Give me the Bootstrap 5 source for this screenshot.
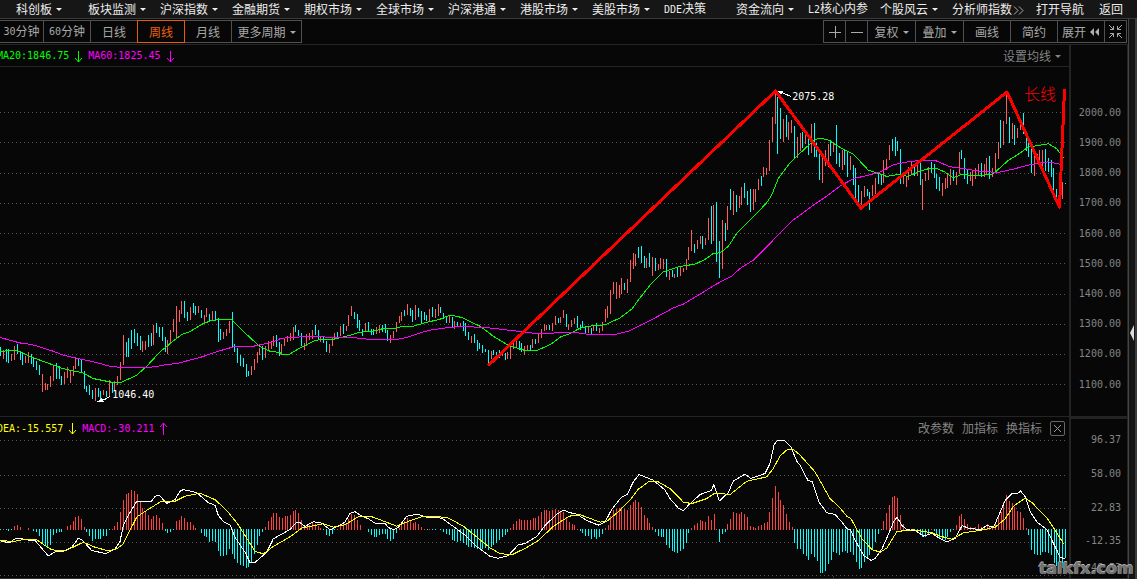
<!DOCTYPE html>
<html lang="zh-CN" data-bs-theme="dark">
<head>
<meta charset="utf-8">
<meta name="viewport" content="width=device-width, initial-scale=1">
<title>周线 K线图</title>
<link href="https://cdn.jsdelivr.net/npm/bootstrap@5.3.0/dist/css/bootstrap.min.css" rel="stylesheet">
<style>
:root{--ink:#070707;--rule:#242424;--edge:#505050;--dim:#848484}
body{background:var(--ink);color:#e6e6e6;font:12px/16px "Noto Sans CJK SC",sans-serif;min-height:100vh}
.num{font-family:"DejaVu Sans Mono",monospace;font-size:10px}
.menu{height:19px;background:#161616;border-bottom:1px solid #3a3a3a}
.menu a{flex:0 1 72px;color:#ececec;text-decoration:none;white-space:nowrap;overflow:hidden}
.menu a.first{flex-basis:16px}
.menu a.wide{flex-basis:84px}
.menu a.mid{flex-basis:63px}
.menu a.end{flex-basis:38px}
.tri::after{content:"";display:inline-block;margin-left:4px;vertical-align:3px;border:3px solid transparent;border-top-color:currentColor;border-bottom:0}
.tools{height:26px;padding:1px 2px 0 0;border-bottom:1px solid var(--rule)}
.tool{height:23px;width:48px;margin-right:-1px;padding:0;border:1px solid var(--edge);border-radius:0;background:none;color:#a8a8a8;font:inherit;white-space:nowrap}
.tool .num{vertical-align:1px}
.tool.slim{width:23px}
.tool.broad{width:71px}
.tool.roomy{width:49px}
.tool.active{border-color:#e85a0c;color:#f06010;position:relative;z-index:1}
.tool:first-child.cut{border-left:0;width:44px}
.tool svg{display:block;margin:auto}
.rail{width:9px;background:linear-gradient(90deg,#444 0 1px,#151515 1px 7px,#3c3c3c 7px)}
.rail svg{display:block}
.pane-main{flex:372 1 0;min-height:0}
.pane-macd{flex:161 1 0;min-height:0;border-bottom:1px solid #303030}
.legend-row{height:22px;flex:none}
.legend-row .num{white-space:pre;padding-top:1px}
.pane-main .legend-row,.pane-main{border-bottom:1px solid var(--rule)}
.up-shift{margin-left:-3px}
.lime{color:#0f0}.magenta{color:#f0f}.gold{color:#ff0}
.text-btn{background:none;border:0;padding:0;color:var(--dim);font:inherit}
.close-btn{width:15px;height:15px;border:1px solid #666;border-radius:2px;background:none;padding:0;color:#999}
.close-btn svg{display:block;margin:auto}
.axis{flex:0 0 59px;border-left:2px solid var(--rule);border-right:1px solid var(--rule);color:var(--dim);text-align:right;padding-right:6px}
.axis-price{display:grid;grid-template-rows:52fr repeat(10,30.2fr) 17fr;grid-auto-rows:0;align-items:center;line-height:18px}
.axis-price span,.axis-macd span{min-height:0}
.axis-price span{padding-top:1px}
.axis-macd{display:grid;grid-template-rows:3fr 35fr 34fr 33fr 33fr 21fr;align-items:center;border-top:2px solid var(--rule)}
.plot{position:relative;flex:1 1 0;min-height:0}
.plot svg{position:absolute;inset:0;width:100%;height:100%;shape-rendering:crispEdges}
.tag{position:absolute;color:#fff;transform:translateY(-50%)}
.tag-high{left:74.1%;top:8.6%}
.tag-low{left:10.5%;top:93.8%}
.tag-note{left:95.8%;top:7.4%;color:#f00;font-size:16px;line-height:16px;font-weight:300;white-space:nowrap}
.watermark{position:absolute;right:3px;bottom:1px;font:bold 16px/18px "DejaVu Sans",sans-serif;color:#707070;text-shadow:0 -1px #b4b4b4,-1px 0 #8c8c8c,1px 1px #111}
</style>
</head>
<body class="d-flex flex-column vh-100 overflow-hidden">
<nav class="menu d-flex align-items-center flex-shrink-0" aria-label="主菜单">
<a class="first" href="#" aria-label="更多"></a>
<a class="tri" href="#">科创板</a><a class="tri" href="#">板块监测</a><a class="tri" href="#">沪深指数</a><a class="tri" href="#">金融期货</a><a class="tri" href="#">期权市场</a><a class="tri" href="#">全球市场</a><a class="tri" href="#">沪深港通</a><a class="tri" href="#">港股市场</a><a class="tri" href="#">美股市场</a><a href="#"><span class="num">DDE</span>决策</a><a class="tri" href="#">资金流向</a><a href="#"><span class="num">L2</span>核心内参</a><a class="tri" href="#">个股风云</a><a class="wide" href="#">分析师指数<svg width="13" height="9" viewBox="0 0 13 9" fill="none" stroke="#aaa"><path d="M2 .5l4 4-4 4M7 .5l4 4-4 4"/></svg></a><a class="mid" href="#">打开导航</a><a class="end" href="#">返回</a>
</nav>
<div class="d-flex flex-grow-1" style="min-height:0">
<main class="d-flex flex-column flex-grow-1" style="min-width:0">
<div class="tools d-flex justify-content-between flex-shrink-0">
<div class="d-flex">
<button class="tool cut"><span class="num">30</span>分钟</button><button class="tool"><span class="num">60</span>分钟</button><button class="tool">日线</button><button class="tool active">周线</button><button class="tool">月线</button><button class="tool broad tri">更多周期</button>
</div>
<div class="d-flex">
<button class="tool slim" aria-label="放大"><svg width="12" height="12" stroke="#aaa"><path d="M0 6.500h12M6.500 0v12"/></svg></button><button class="tool slim" aria-label="缩小"><svg width="12" height="12" stroke="#aaa"><path d="M0 6.500h12"/></svg></button><button class="tool roomy tri">复权</button><button class="tool roomy tri">叠加</button><button class="tool">画线</button><button class="tool">简约</button><button class="tool"><span class="d-flex align-items-center justify-content-center gap-1">展开<svg class="m-0" width="10" height="8" fill="#b0b0b0"><path d="M4 0v8L0 4zM9 0v8L5 4z"/></svg></span></button><button class="tool slim" aria-label="还原"><svg width="13" height="13" fill="none" stroke="#aaa"><path d="M0 0l4.500 4.500M1 4.500h3.500V1M13 0L8.500 4.500M12 4.500H8.500V1M0 13l4.500-4.500M1 8.500h3.500V12M13 13L8.500 8.500M12 8.500H8.500V12"/></svg></button>
</div>
</div>
<section class="pane-main d-flex" aria-label="K线">
<div class="d-flex flex-column flex-grow-1">
<div class="legend-row d-flex justify-content-between align-items-center">
<div class="d-flex align-items-center num up-shift"><span class="lime">MA20:1846.75</span><svg class="mx-1" width="11" height="13" fill="none" stroke="#0f0"><path d="M5.500 1v11M2 8l3.500 4L9 8"/></svg><span class="magenta">MA60:1825.45</span><svg class="mx-1" width="11" height="13" fill="none" stroke="#f0f"><path d="M5.500 1v11M2 8l3.500 4L9 8"/></svg></div>
<button class="text-btn tri me-2">设置均线</button>
</div>
<div class="plot">
<svg viewBox="0 67 1069 349" preserveAspectRatio="none" fill="none">
<path stroke="#555" stroke-dasharray="1 3" d="M0 112.500H1065M0 142.500H1065M0 173.500H1065M0 203.500H1065M0 233.500H1065M0 263.500H1065M0 294.500H1065M0 324.500H1065M0 354.500H1065M0 384.500H1065"/>
<path id="rise" stroke="#ff5c5c"/><path id="fall" stroke="#00ffff"/>
<path id="ma20" stroke="#00ff00"/><path id="ma60" stroke="#ff00ff"/>
<path stroke="#ff0000" stroke-width="3" stroke-linejoin="round" stroke-linecap="round" d="M489 364.500L775.500 91L861 208L1007 92L1059.500 207L1064.500 90"/>
<path stroke="#fff" d="M779 91.500l5 2 7 3M98 401l7-2 5-3"/><path fill="#fff" d="M777 90.500h7l-3 4zM97 401.500l5-4 2 4z"/>
</svg>
<span class="tag tag-high num">2075.28</span><span class="tag tag-low num">1046.40</span><span class="tag tag-note">长线</span>
</div>
</div>
<div class="axis axis-price num"><i></i><span>2000.00</span><span>1900.00</span><span>1800.00</span><span>1700.00</span><span>1600.00</span><span>1500.00</span><span>1400.00</span><span>1300.00</span><span>1200.00</span><span>1100.00</span><i></i></div>
</section>
<section class="pane-macd d-flex" aria-label="MACD">
<div class="d-flex flex-column flex-grow-1">
<div class="legend-row d-flex justify-content-between align-items-center">
<div class="d-flex align-items-center num up-shift"><span class="gold">DEA:-15.557</span><svg class="mx-1" width="11" height="13" fill="none" stroke="#ff0"><path d="M5.500 1v11M2 8l3.500 4L9 8"/></svg><span class="magenta">MACD:-30.211</span><svg class="mx-1" width="11" height="13" fill="none" stroke="#f0f"><path d="M5.500 13V1M2 5l3.500-4L9 5"/></svg></div>
<div class="d-flex align-items-center gap-2 pe-1"><button class="text-btn">改参数</button><button class="text-btn">加指标</button><button class="text-btn">换指标</button><button class="close-btn" aria-label="关闭"><svg width="9" height="9" stroke="#999"><path d="M1 1l7 7M8 1L1 8"/></svg></button></div>
</div>
<div class="plot">
<svg viewBox="0 439 1069 138" preserveAspectRatio="none" fill="none">
<path stroke="#555" stroke-dasharray="1 3" d="M0 440.500H1065M0 475.500H1065M0 508.500H1065M0 541.500H1065M0 574.500H1065"/>
<path stroke="#333" d="M106.500 575v2M254.500 575v2M398.500 575v2M543.500 575v2M688.500 575v2M833.500 575v2M981.500 575v2"/>
<path id="plus" stroke="#ff4040"/><path id="minus" stroke="#00ffff"/>
<path id="dif" stroke="#fff"/><path id="dea" stroke="#ff0"/>
</svg>
</div>
</div>
<div class="axis axis-macd num"><i></i><span>96.37</span><span>58.00</span><span>22.83</span><span>-12.35</span><span>-46.53</span></div>
</section>
</main>
<aside class="rail d-flex align-items-center flex-shrink-0" aria-label="侧栏"><svg width="9" height="110" fill="#ddd"><path d="M2 89l4-8v16z"/></svg></aside>
</div>
<div class="watermark">talkfx.com</div>
<script src="https://cdn.jsdelivr.net/npm/bootstrap@5.3.0/dist/js/bootstrap.bundle.min.js"></script>
<script>
// Samples are stored in thirds of a pixel, relative to each block's origin.
const put = (id, d) => document.getElementById(id).setAttribute('d', d);
// Price bars: [first x, origin y, "colour high,low ..."]
const bars = [
[.5,280,'c201,228 r210,237 c207,246 c207,249 r222,243 r198,240 c192,222 c213,240 c216,255 r228,249 r216,249 c222,252 c231,261 c243,270 c255,285 r282,336 r309,330 r312,330 r288,321 r255,303 c249,297 c258,297 c288,315 r276,312 r261,294 r270,309 r258,288 r231,267 c234,258 c237,276 c273,327 c318,336 c315,345 c330,357 r324,363 c324,350 c333,363 r330,345 c333,351 r300,348 c306,339 r303,333 r288,315 r246,300 r165,255 c186,231 c174,232 c150,207 c147,189 c159,198 c168,210 r183,216 r183,210 c165,201 c159,198 r135,195 c129,159 c141,171 c141,183 c171,216 r180,222 r150,189 r117,156 r78,177 r90,126 r63,102 c63,114 c96,123 r81,120 c69,99 c78,105 r78,99 c90,114 r105,132 r84,111 c102,123 r93,120 c93,120 c114,186 c147,180 r156,177 r147,168 r123,159 c96,204 c192,216 c204,249 c225,258 c234,262 c252,291 c273,288 r258,285 r237,270 r216,249 r204,225 c198,240 r198,234 r183,210 r183,207 r168,198 c165,200 c186,228'],
[281.85,280,'r192,225 r177,198 r168,186 r159,183 r141,180 c135,156 c150,168 c159,198 r189,210 r162,198 r159,180 r150,177 c135,165 c150,180 r171,186 c171,189 c183,216 r192,219 r174,198 r159,180 c156,171 r138,168 c132,162 r138,153 r105,138 r78,108 c96,117 c102,144 c120,153 c147,168 r129,153 c126,153 c147,165 c147,165 r141,162 r135,159 c135,156 c132,159 c150,183 r165,189 r153,174 r126,156 r108,129 r96,123 c90,108 r72,105 c84,108 c90,126 r75,120 c84,111 c93,132 c96,120 c105,123 r87,123 c81,111 r87,114 r72,108 c81,99 c99,117 c108,129 r108,129 c111,141 r123,147 c126,138 r129,141 c123,153 c129,168 c156,180 r168,189 c162,189 c180,213 c189,207 c195,219 c207,216 c210,249 r213,237 c210,225 c216,231 c210,234 r216,228 c219,240 r216,237 r195,237 r189,207 r183,204 c183,210 c189,216 r198,225 r195,213 c195,210 r177,204 c177,192 r162,189 r147,174 r132,153 r135,150 c135,150 r129,153 r108,135 c114,129'],
[560.5,180,'r411,429 r390,414 c402,441 r432,450 r420,441 r414,432 c408,444 c435,450 c423,444 c438,459 r441,459 c444,462 r435,453 c429,453 r444,459 r426,453 r387,426 r378,414 r330,402 r306,342 r306,357 r315,354 r294,342 c309,330 r297,339 r240,306 r219,267 r222,258 c201,234 c198,249 c228,264 r234,264 c219,261 r231,288 c234,273 r252,270 r234,267 r237,267 c237,291 r273,300 c270,291 r282,294 c264,291 r261,288 r264,276 r237,270 r201,240 r150,213 c192,219 r180,207 r168,192 c168,207 r174,195 r114,180 c78,192 r75,183 c66,246 c183,294 r120,267 c129,183 r78,150 c27,90 r33,105 c45,96 r48,84 r21,75 c9,54 c33,75 c27,96 r27,90 r27,66'],
[758.3,70,'r327,360 c318,348 r291,321 r294,315 r210,303 r141,216 r60,162 c81,252 c114,207 r147,216 c135,201 r156,210 r150,189 c168,264 r201,264 r189,243 c186,234 r195,222 c207,255 r162,249 c159,261 c219,261 c240,330 r255,339 r240,288 r222,291 c210,258 r216,246 c165,282 c249,291 r240,300 c237,285 c246,321 r258,300 c285,345 c294,384 c345,402 r363,405 r348,381 c357,378 c366,420 r345,378 r324,372 c309,342 c312,345 r270,339 r267,300 r225,270 c207,243 c201,258 c213,243 c237,342 r312,342 r318,351 r291,330 r276,315 c282,318 r285,318 c276,345 r327,420 r309,333 r291,330 c276,309 c282,324 c312,357 c321,362'],
[942.3,70,'r339,378 r324,357 r309,354 r297,345 c300,333 r306,345 r246,312 c240,267 c264,327 c297,342 r306,333 r303,348 r294,327 r282,318 c279,321 r282,321 r264,312 c258,327 r294,321 r249,309 r216,267 c150,234 r153,225 r72,162 c141,219 r159,207 c165,225 r174,204 r162,180 c129,192 c186,243 c210,261 c237,309 r258,318 r252,279 r240,276 r240,288 c237,303 c264,306 c270,321 c294,369 c357,384 c384,405 r336,387 c339,342']];
let up='',down='';
for (const [x0,y0,s] of bars) s.split(' ').forEach((t,k)=>{
  const [a,b]=t.slice(1).split(',').map(v=>y0+Math.round(v/3));
  const seg=`M${Math.floor(x0+2.79*k)+.5} ${a}V${b}`;
  if(t[0]==='r') up+=seg; else down+=seg;
});
put('rise',up); put('fall',down);
// MACD histogram: [first x, bar ends], zero line at 343, "-" is an empty slot
const hist = [
[.5,'345 342 345 348 345 333 330 336 - - 339 - 348 351 363 381 387 393 387 360 354 351 351 - 333 330 318 306 303 312 336 351 363 375 369 369 369 363 363 345 342 333 321 291 255 237 234 225 228 237 258 279 288 300 312 303 300 309 324 348 354 351 345 318 315 303 309 321 321 330 339 - 354 363 366 378 375 378 405 420 420 417 399 414 429 441 447 450 456 453 438 414 387 363 351 336 318 306 294 294 306 309 303 303'],
[290.3,'300 288 285 294 315 330 327 330 324 327 333 339 345 360 363 357 345 342 333 327 324 312 297 300 315 330 - - 351 360 366 366 360 357 357 369 375 369 354 339 324 318 309 315 324 321 327 336 342 345 342 345 345 - 345 351 357 360 372 375 378 375 381 387 393 393 396 399 399 399 396 402 393 387 381 372 366 360 351 339 327 318 312 315 315 315 315 309 309 303 291 285 285 288 285 282 285 288 291 309 321 327 330 342'],
[580.1,'348 354 363 363 369 366 369 366 357 339 330 303 285 282 279 276 282 285 270 261 255 261 276 300 309 324 336 351 363 366 366 387 396 405 408 411 405 399 381 354 339 330 324 315 318 321 303 315 297 342 378 357 351 327 312 291 294 297 291 297 306 333 336 339 333 330 324 321 291 249 213 231 255 270 297 321 336 381 399 399 414 420 432 414 423 435 471 471 465 444 432 408 411 417 408 405 411 408 417 438 459'],
[861.5,'456 438 426 417 399 378 357 345 318 294 270 246 243 249 300 327 342 - 345 348 351 360 366 366 360 342 348 360 369 372 372 366 351 345 330 303 297 312 327 336 339 336 327 336 333 327 336 333 324 300 291 261 240 258 264 276 288 291 309 339 360 402 414 417 417 408 408 411 417 441 450 459 456 426']];
let plus='',minus='';
for (const [x0,s] of hist) s.split(' ').forEach((t,k)=>{
  if(t==='-') return;
  const x=Math.floor(x0+2.79*k)+.5, y=415+Math.round(t/3);
  if(t>343) minus+=`M${x} 529V${y}`; else plus+=`M${x} ${y}V530`;
});
put('plus',plus); put('minus',minus);
// Curves: blocks of [origin x, origin y, points]
const curve=(id,blocks)=>put(id,'M'+blocks.map(([ox,oy,s])=>s.split(' ').map(p=>{const [x,y]=p.split(',');return (ox+x/3).toFixed(1)+' '+(oy+y/3).toFixed(1)}).join('L')).join('L'));
curve('ma60',[
[0,280,'0,172 30,180 60,188 95,193 125,202 160,213 190,225 230,234 270,242 300,250 330,258 365,262 430,262 460,260 500,253 530,250 560,242 600,232 640,218 665,210 700,200 760,198 800,190 835,179'],
[280,280,'0,175 30,172 80,169 120,169 150,172 230,173 270,178 350,178 380,172 420,158 450,150 490,144 540,139 600,141 640,144 680,149 720,154 770,160 820,159'],
[540,180,'45,457 115,458 150,463 225,463 265,453 310,431 360,405 400,383 430,372 470,348 530,311 575,288 600,265 640,240 690,190 720,158 755,123 780,105'],
[740,70,'220,405 260,378 300,348 340,326 385,315 420,306 460,284 500,276 540,271 565,271'],
[930,70,'0,271 15,271 60,290 110,297 150,304 205,307 250,297 300,284 355,275 400,284']]);
curve('ma20',[
[0,280,'0,214 35,210 60,214 95,231 140,247 185,264 225,274 245,276 280,295 340,307 362,307 410,285 440,258 480,215 520,182 545,163 570,154 610,130 635,121 660,118 694,118 700,124 735,158 775,195 790,204 810,213 839,217'],
[280,280,'10,223 27,223 60,203 80,193 100,183 120,178 160,177 200,168 240,156 280,153 310,145 345,144 365,139 400,138 430,129 480,117 500,108 515,105 545,112 600,138 640,168 690,198 715,204 735,211 770,211'],
[540,180,'20,498 40,487 60,471 90,460 120,444 160,436 195,434 240,413 275,387 300,353 330,315 370,275 420,259 465,252 495,238 520,220 540,218 565,199 590,160 620,130'],
[740,70,'40,440 80,398 95,375 115,325 150,278 190,240 225,208 245,205 265,210 300,232 340,252 385,300 440,319 475,313 505,319 540,303 565,296'],
[930,70,'0,295 20,295 45,306 70,323 95,313 130,317 185,313 200,302 235,271 260,256 295,231 355,221 380,236 400,263']]);
curve('dif',[
[0,415,'0,376 28,382 45,370 65,368 75,373 105,375 120,392 145,421 165,409 195,406 215,395 235,368 245,372 275,405 318,414 345,400 360,378 370,330 385,300 410,258 455,257 465,243 478,240 500,264 525,253 540,228 550,223 590,232 625,262 645,270 655,300 672,320 690,328 705,365 735,410 750,441 763,442 800,410 820,370'],
[290,415,'0,342 20,320 30,322 45,333 70,319 95,323 120,343 145,332 165,320 180,294 195,289 215,302 235,310 258,325 285,323 295,336 310,343 325,336 350,303 380,296 410,305 455,308 490,333 530,363 560,393 600,422 625,428 655,420 685,388 705,384 740,363 765,330 800,297 820,284'],
[570,415,'0,292 20,296 50,315 85,329 105,320 125,282 155,245 172,237 190,200 207,178 250,195 285,224 300,250 325,278 340,286 355,270 390,238 425,225 431,208 448,257 475,232 490,198 525,177 542,190 585,175 600,145 612,90 622,76 642,76 663,96 680,138 690,150 714,196 727,199 747,260 770,292 795,297 820,325'],
[847,415,'0,340 10,342 25,375 50,420 72,434 85,428 105,400 125,355 140,318 150,306 165,330 180,343 205,345 230,362 255,354 280,370 300,379 325,368 345,331 365,338 400,343 420,330 440,335 455,300 475,255 495,235 515,233 521,227 535,245 550,290 570,320 600,343 620,385 640,425 655,430']]);
curve('dea',[
[0,415,'0,376 45,377 65,373 110,373 150,400 165,404 200,404 250,380 285,395 325,406 350,400 368,387 385,355 410,305 440,285 485,257 525,258 555,243 600,234 645,253 680,285 715,328 735,360 765,407 790,415 820,393'],
[290,415,'0,364 35,338 100,325 130,335 165,328 205,304 245,304 275,315 320,332 360,316 395,304 470,305 520,332 555,360 600,397 630,414 665,418 710,396 745,375 790,333 830,307'],
[570,415,'0,302 30,298 90,320 110,318 150,285 185,248 205,222 235,200 265,200 300,220 340,260 365,265 410,250 435,233 480,238 530,198 590,185 610,160 630,123 650,105 670,103 690,120 735,170 780,250 805,272'],
[847,415,'0,303 12,310 45,370 75,402 100,410 120,397 150,348 200,343 255,352 280,362 315,371 350,352 400,345 445,335 475,310 500,272 535,248 555,262 600,308 625,345 650,385']]);
</script>
</body>
</html>
